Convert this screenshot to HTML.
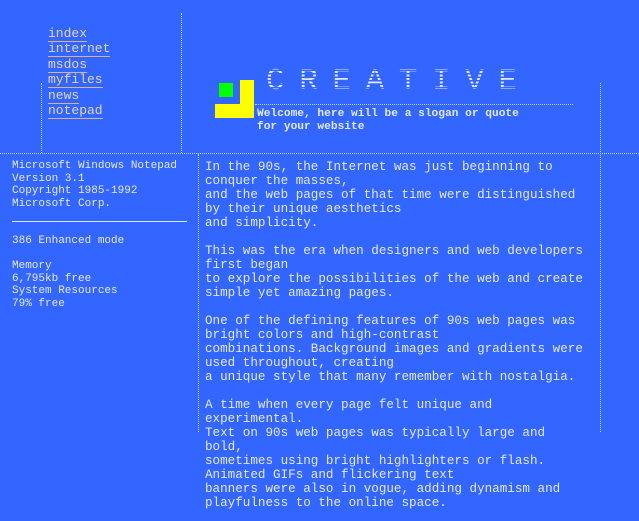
<!DOCTYPE html>
<html><head><meta charset="utf-8"><style>
html,body{margin:0;padding:0;}
body{width:639px;height:521px;background:#3366ff;position:relative;overflow:hidden;font-family:"Liberation Mono",monospace;color:#e4e8ff;}
.a{position:absolute;}
.vl{position:absolute;border-left:1px dotted #c8d4ff;width:0;}
.hl{position:absolute;border-top:1px dotted #c8d4ff;height:0;}
.nav{left:48px;top:26px;font-size:13px;line-height:15.4px;}
.nav a{color:#e0d4cc;text-decoration:none;border-bottom:1px solid #d8b48c;}
.side{left:12px;top:160px;font-size:11px;line-height:12.5px;white-space:pre;}
.main{left:205px;top:160px;font-size:12.6px;line-height:14px;white-space:pre;}
.title{left:266px;top:64px;font-size:31px;line-height:36px;letter-spacing:14.6px;color:transparent;
background:repeating-linear-gradient(#e4e8ff 0 2px,#3366ff 2px 3.5px);-webkit-background-clip:text;background-clip:text;}
.slogan{left:257px;top:108px;font-size:11.2px;line-height:13px;font-weight:bold;white-space:pre;}
</style></head><body>
<div class="vl" style="left:181px;top:13px;height:140px"></div>
<div class="vl" style="left:41px;top:83px;height:70px"></div>
<div class="vl" style="left:600px;top:83px;height:349px"></div>
<div class="vl" style="left:198px;top:154px;height:278px"></div>
<div class="hl" style="left:0;top:153px;width:639px"></div>
<div class="hl" style="left:255px;top:104px;width:318px"></div>
<div class="a nav"><a>index</a><br><a>internet</a><br><a>msdos</a><br><a>myfiles</a><br><a>news</a><br><a>notepad</a></div>
<div class="a" style="left:240px;top:80px;width:14px;height:38px;background:#ffff00"></div>
<div class="a" style="left:215px;top:104px;width:39px;height:14px;background:#ffff00"></div>
<div class="a" style="left:219px;top:83px;width:14px;height:14px;background:#00ff00"></div>
<div class="a title">CREATIVE</div>
<div class="a slogan">Welcome, here will be a slogan or quote
for your website</div>
<div class="a side">Microsoft Windows Notepad
Version 3.1
Copyright 1985-1992
Microsoft Corp.


386 Enhanced mode

Memory
6,795kb free
System Resources
79% free</div>
<div class="a" style="left:12px;top:221px;width:175px;height:1px;background:#dde4ff"></div>
<div class="a main">In the 90s, the Internet was just beginning to
conquer the masses,
and the web pages of that time were distinguished
by their unique aesthetics
and simplicity.

This was the era when designers and web developers
first began
to explore the possibilities of the web and create
simple yet amazing pages.

One of the defining features of 90s web pages was
bright colors and high-contrast
combinations. Background images and gradients were
used throughout, creating
a unique style that many remember with nostalgia.

A time when every page felt unique and
experimental.
Text on 90s web pages was typically large and
bold,
sometimes using bright highlighters or flash.
Animated GIFs and flickering text
banners were also in vogue, adding dynamism and
playfulness to the online space.</div>
</body></html>
